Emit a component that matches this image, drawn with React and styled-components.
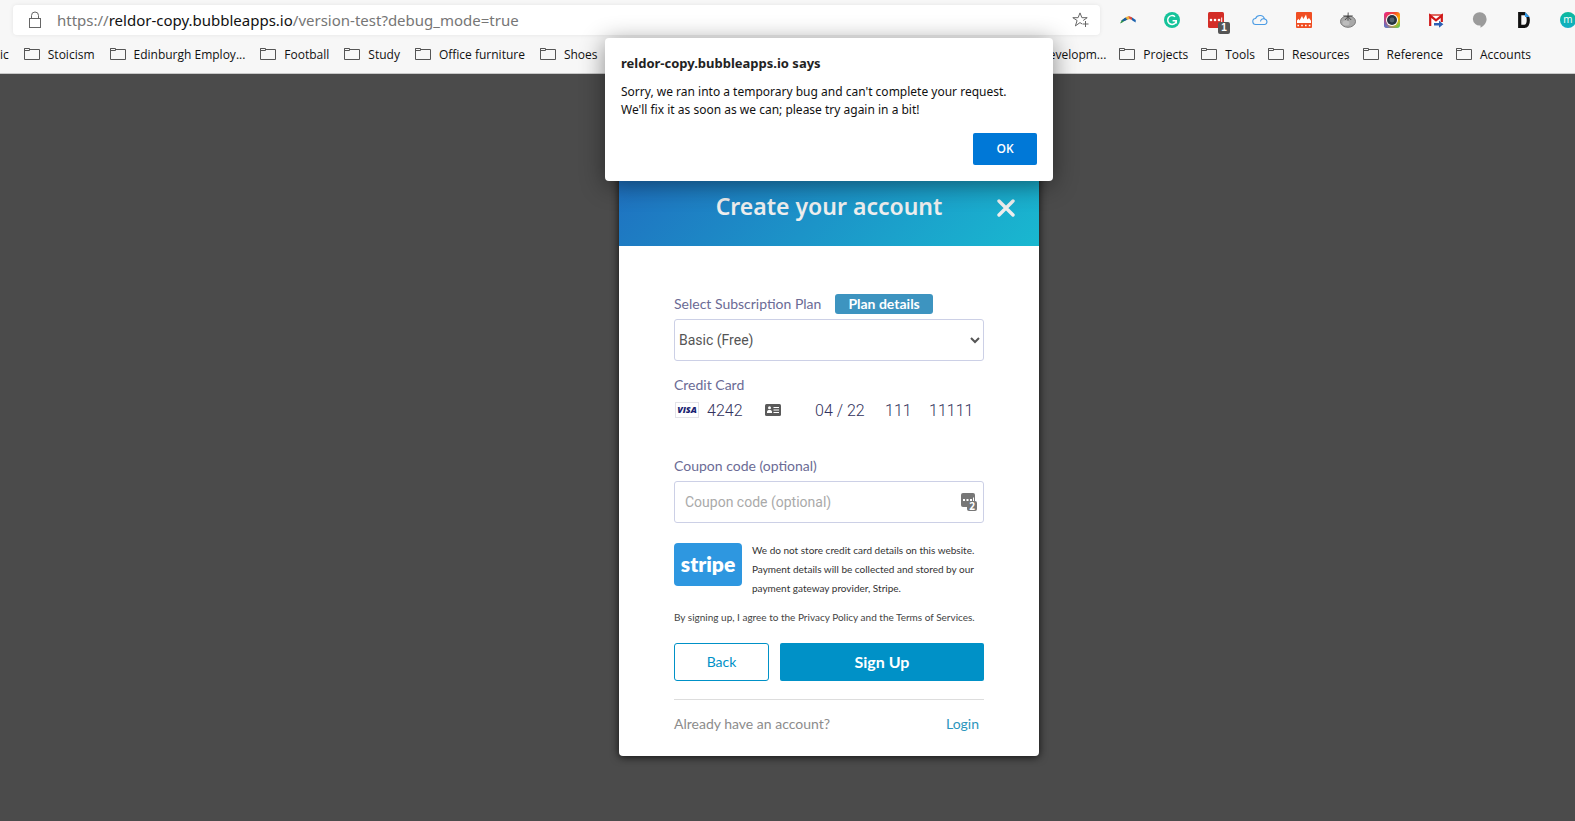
import { useState } from "react";
import styled, { createGlobalStyle } from "styled-components";

const folders = ["Stoicism", "Edinburgh Employ...", "Football", "Study", "Office furniture", "Shoes"];
const moreFolders = ["Projects", "Tools", "Resources", "Reference", "Accounts"];

const LockIcon = () => (
  <svg width="14" height="18" viewBox="0 0 14 18" fill="none" stroke="#666" strokeWidth="1">
    <rect x="1.5" y="7.5" width="11" height="9" />
    <path d="M3.5 7.5V4.5a3.5 3.5 0 0 1 7 0v3" />
  </svg>
);

const StarIcon = () => (
  <svg width="17" height="16" viewBox="0 0 17 16" fill="none" stroke="#666" strokeWidth="1">
    <path d="M10 11.9 8 10.6l-4.6 3.3 1.7-5.4L.8 5.7h5.3L8 .9l1.9 4.8h5.3l-4 2.8" />
    <path d="M13.5 9v6M10.5 12h6" />
  </svg>
);

const FolderIcon = () => (
  <svg width="16" height="12" viewBox="0 0 16 12" fill="none" stroke="#555" strokeWidth="1">
    <path d="M.5.5h5v2h-5zM5.5 1.5h10v10H.5v-11" />
  </svg>
);

const ContactIcon = () => (
  <svg width="16" height="12" viewBox="0 0 16 12">
    <rect width="16" height="12" rx="1.5" fill="#5a5a5a" />
    <circle cx="4.5" cy="3.8" r="1.5" fill="#fff" />
    <path d="M2 9V7.6C2 6.5 3 6 4.5 6S7 6.5 7 7.6V9z" fill="#fff" />
    <path d="M8.5 3.5H14M8.5 6H14M8.5 8.5H14" stroke="#fff" strokeWidth="1" />
  </svg>
);

const extensions = [
  {
    name: "Arc",
    art: (
      <>
        <path d="M0 11.5 1.8 8.2 5 6l1 2-3.4 2.2z" fill="#2f8f46" />
        <path d="M1.5 8.5 5 5.8 7 5l.8 2.6-3.3 1.5z" fill="#1b5c9e" />
        <path d="M5.5 5.2 9 4l1.2 3-3 .7z" fill="#f0b23c" />
        <path d="M8.5 4 12 5.2 12 8 9.6 6.9z" fill="#dc4a3d" />
        <path d="M11.8 5.2 15.8 8l-.2 2.4L12 8.2z" fill="#1b62ae" />
      </>
    ),
  },
  {
    name: "Grammar",
    art: (
      <>
        <circle cx="8" cy="8" r="8" fill="#15c39a" />
        <path d="M11 4.7A4.4 4.4 0 1 0 12.3 9.2M8.6 8.8h3.7v2.8" fill="none" stroke="#fff" strokeWidth="1.5" />
      </>
    ),
  },
  {
    name: "Passwords",
    count: "1",
    art: (
      <>
        <rect width="16" height="16" rx="1.5" fill="#d32d27" />
        <circle cx="3" cy="8" r="1.3" fill="#fff" />
        <circle cx="7" cy="8" r="1.3" fill="#fff" />
        <circle cx="11" cy="8" r="1.3" fill="#fff" />
        <rect x="13.2" y="5.5" width="1" height="5" fill="#fff" />
      </>
    ),
  },
  {
    name: "Cloud",
    art: (
      <path
        d="M4 12.5a3 3 0 0 1-.4-6A4.7 4.7 0 0 1 12.5 7a2.8 2.8 0 0 1 .3 5.5zM8.5 9.5A2.8 2.8 0 0 1 12.4 7"
        fill="none"
        stroke="#4a9be4"
        strokeWidth="1.1"
      />
    ),
  },
  {
    name: "Heat",
    art: (
      <>
        <rect width="16" height="16" rx="1" fill="#f04e23" />
        <path d="M1 11V8.5l1.7-1.8.8 1.8L6 4l1.4 3L10 2.5l1.3 5L13 6l2 2.8V11z" fill="#fff" />
        <path d="M1.4 13.4h13.5" stroke="#fff" strokeWidth="1.5" strokeDasharray="1.6 2.2" />
      </>
    ),
  },
  {
    name: "Tomato",
    art: (
      <>
        <ellipse cx="8" cy="9.5" rx="7.5" ry="5.8" fill="#a8a8a8" stroke="#777" />
        <ellipse cx="6" cy="11" rx="3.5" ry="2.5" fill="#bdbdbd" />
        <path d="m8 4.6-4.6-.8M8 4.6l4.6-.8M8 4.6 5 8M8 4.6 11.2 8M8 5l.2-4.5M8 5v3.6" fill="none" stroke="#444" strokeWidth=".9" />
      </>
    ),
  },
  {
    name: "Camera",
    art: (
      <>
        <defs>
          <linearGradient id="lensWarm" x1="0" y1="0" x2="1" y2="1">
            <stop offset="0" stopColor="#e0249a" />
            <stop offset=".35" stopColor="#f3462c" />
            <stop offset=".65" stopColor="#ffb000" />
            <stop offset="1" stopColor="#35c86a" />
          </linearGradient>
          <linearGradient id="lensCool" x1="1" y1="0" x2="0" y2="1">
            <stop offset=".55" stopColor="#5b52f0" stopOpacity="0" />
            <stop offset="1" stopColor="#2b78ff" />
          </linearGradient>
        </defs>
        <rect width="16" height="16" rx="3" fill="url(#lensWarm)" />
        <rect width="16" height="16" rx="3" fill="url(#lensCool)" />
        <circle cx="8" cy="8" r="6" fill="#fff" />
        <circle cx="8" cy="8" r="5" fill="#26343f" />
        <circle cx="8" cy="8" r="2.4" fill="#53646f" />
      </>
    ),
  },
  {
    name: "Mail",
    art: (
      <>
        <rect x="1" y="2" width="14" height="12" fill="#fff" />
        <path d="M1 2h14v2H1z" fill="#e06a62" />
        <path d="M2.2 14V3.6L8 8.4l5.8-4.8V10" fill="none" stroke="#d01818" strokeWidth="2.2" />
        <path d="M6 11h5V8.8l4.4 3.5-4.4 3.5v-2.4H6z" fill="#2d5fb4" />
      </>
    ),
  },
  {
    name: "Chat",
    art: <path d="M8 .3a6.6 6.6 0 0 1 6.6 6.6c0 3.8-2.8 7-6.1 8.8v-2.3A6.6 6.6 0 1 1 8 .3z" fill="#9b9b9b" />,
  },
  {
    name: "Document",
    art: (
      <>
        <path d="M3.7 1.7h4.5c3.5 0 4.1 3.1 4.1 6.3s-.6 6.3-4.1 6.3H3.7z" fill="none" stroke="#111" strokeWidth="3.2" />
        <path d="M9 0h5v5.5z" fill="#f7f7f7" />
        <path d="M9 .3 13.6 5H9z" fill="#2e9cf0" />
      </>
    ),
  },
  {
    name: "Messages",
    art: (
      <>
        <defs>
          <linearGradient id="teal" x1="0" y1="0" x2="0" y2="1">
            <stop offset="0" stopColor="#0cb99b" />
            <stop offset="1" stopColor="#12aec5" />
          </linearGradient>
        </defs>
        <circle cx="8" cy="8" r="8" fill="url(#teal)" />
        <text x="8" y="11" textAnchor="middle" fontFamily="Open Sans, sans-serif" fontSize="10" fill="#fff">m</text>
      </>
    ),
  },
];

const App = () => {
  const [plan, setPlan] = useState("basic");
  const [coupon, setCoupon] = useState("");
  const [open, setOpen] = useState(true);

  return (
    <Window>
      <GlobalStyle />
      <Toolbar>
        <AddressRow>
          <AddressBar>
            <LockIcon />
            <Url>
              https://<b>reldor-copy.bubbleapps.io</b>/version-test?debug_mode=true
            </Url>
            <StarIcon />
          </AddressBar>
          <Extensions>
            {extensions.map(({ name, art, count }) => (
              <Extension key={name} type="button">
                <svg width="16" height="16" viewBox="0 0 16 16">{art}</svg>
                {count && <Count>{count}</Count>}
              </Extension>
            ))}
          </Extensions>
        </AddressRow>
        <Bookmarks>
          <BookmarkGroup $gap={15}>
            <Bookmark href="#">ic</Bookmark>
            {folders.map((folder) => (
              <Bookmark key={folder} href="#">
                <FolderIcon />
                {folder}
              </Bookmark>
            ))}
          </BookmarkGroup>
          <BookmarkGroup $gap={13}>
            <Bookmark href="#">evelopm...</Bookmark>
            {moreFolders.map((folder) => (
              <Bookmark key={folder} href="#">
                <FolderIcon />
                {folder}
              </Bookmark>
            ))}
          </BookmarkGroup>
        </Bookmarks>
      </Toolbar>

      <Page>
        <Modal>
          <ModalHeader>
            <Title>Create your account</Title>
            <CloseButton type="button" aria-label="Close">
              <svg width="18" height="18" viewBox="0 0 18 18" stroke="currentColor" strokeWidth="3.4" strokeLinecap="round">
                <path d="M2 2l14 14M16 2 2 16" />
              </svg>
            </CloseButton>
          </ModalHeader>
          <Form onSubmit={(e) => e.preventDefault()}>
            <LabelRow>
              <Label htmlFor="plan">Select Subscription Plan</Label>
              <PlanButton type="button">Plan details</PlanButton>
            </LabelRow>
            <Select id="plan" value={plan} onChange={(e) => setPlan(e.target.value)}>
              <option value="basic">Basic (Free)</option>
            </Select>

            <CardLabel htmlFor="card">Credit Card</CardLabel>
            <CardRow>
              <Visa>VISA</Visa>
              <CardInput id="card" defaultValue="4242" $width={46} />
              <ContactIcon />
              <CardInput aria-label="Expiry" defaultValue="04 / 22" $width={58} $indent={22} />
              <CardInput aria-label="CVC" defaultValue="111" $width={32} />
              <CardInput aria-label="ZIP" defaultValue="11111" $width={48} />
            </CardRow>

            <CouponLabel htmlFor="coupon">Coupon code (optional)</CouponLabel>
            <CouponBox>
              <CouponInput
                id="coupon"
                type="text"
                placeholder="Coupon code (optional)"
                value={coupon}
                onChange={(e) => setCoupon(e.target.value)}
              />
              <svg width="17" height="19" viewBox="0 0 17 19">
                <rect width="14" height="14" rx="2" fill="#777" />
                <path d="M2 6h2v2H2zM5.5 6h2v2h-2zM9 6h2v2H9zM12 4.5h1V9h-1z" fill="#fff" />
                <rect x="6" y="8" width="10" height="10" rx="2" fill="#777" />
                <text x="11" y="17" textAnchor="middle" fontFamily="Open Sans, sans-serif" fontWeight="700" fontSize="10" fill="#fff">2</text>
              </svg>
            </CouponBox>

            <StripeRow>
              <StripeLogo>stripe</StripeLogo>
              <StripeNote>
                We do not store credit card details on this website. Payment details will be collected and stored by our
                payment gateway provider, Stripe.
              </StripeNote>
            </StripeRow>
            <Terms>By signing up, I agree to the Privacy Policy and the Terms of Services.</Terms>

            <Buttons>
              <BackButton type="button">Back</BackButton>
              <SignUpButton type="submit">Sign Up</SignUpButton>
            </Buttons>
            <Footer>
              <span>Already have an account?</span>
              <LoginLink href="#">Login</LoginLink>
            </Footer>
          </Form>
        </Modal>
      </Page>

      {open && (
        <AlertLayer>
          <Alert role="alertdialog" aria-labelledby="alert-title">
            <AlertTitle id="alert-title">reldor-copy.bubbleapps.io says</AlertTitle>
            <AlertText>
              Sorry, we ran into a temporary bug and can't complete your request.
              <br />
              We'll fix it as soon as we can; please try again in a bit!
            </AlertText>
            <OkButton type="button" onClick={() => setOpen(false)}>OK</OkButton>
          </Alert>
        </AlertLayer>
      )}
    </Window>
  );
};

export default App;

const GlobalStyle = createGlobalStyle`
  * {
    box-sizing: border-box;
  }
  body {
    margin: 0;
    font-family: "Noto Sans", "Open Sans", sans-serif;
  }
  button {
    cursor: pointer;
  }
`;

const Window = styled.div`
  position: relative;
  display: flex;
  flex-direction: column;
  min-height: 100vh;
  overflow: hidden;
  background: #4b4b4b;
`;

const Toolbar = styled.header`
  padding-top: 5px;
  background: #f7f7f7;
  border-bottom: 1px solid #c8c8c8;
`;

const AddressRow = styled.div`
  display: flex;
  align-items: center;
  height: 30px;
  padding-left: 13px;
`;

const AddressBar = styled.div`
  display: flex;
  flex: 1;
  align-items: center;
  height: 30px;
  padding: 0 11px 0 15px;
  border-radius: 4px;
  background: #fff;
  box-shadow: 0 0 4px rgba(0, 0, 0, 0.08);
`;

const Url = styled.span`
  flex: 1;
  margin-left: 15px;
  color: #767676;
  font-size: 15px;

  b {
    color: #111;
    font-weight: 400;
  }
`;

const Extensions = styled.div`
  display: flex;
  gap: 28px;
  margin-left: 20px;
  margin-right: -1px;
`;

const Extension = styled.button`
  position: relative;
  display: block;
  width: 16px;
  height: 16px;
  padding: 0;
  border: 0;
  background: none;

  svg {
    display: block;
  }
`;

const Count = styled.span`
  position: absolute;
  top: 10px;
  left: 10px;
  width: 12px;
  border-radius: 2px;
  background: #555;
  color: #fff;
  font-size: 10px;
  font-weight: 700;
  line-height: 12px;
`;

const Bookmarks = styled.nav`
  display: flex;
  align-items: center;
  justify-content: space-between;
  height: 38px;
  padding-right: 44px;
`;

const BookmarkGroup = styled.div`
  display: flex;
  gap: ${({ $gap }) => $gap}px;
`;

const Bookmark = styled.a`
  display: flex;
  align-items: center;
  gap: 8px;
  color: #111;
  font-family: "Open Sans", sans-serif;
  font-size: 12px;
  text-decoration: none;
  white-space: nowrap;
`;

const Page = styled.main`
  display: flex;
  flex: 1;
  align-items: flex-start;
  justify-content: center;
  padding: 92px 0 65px 83px;
`;

const Modal = styled.section`
  width: 100%;
  max-width: 420px;
  overflow: hidden;
  border-radius: 4px;
  background: #fff;
  box-shadow: 0 1px 8px rgba(0, 0, 0, 0.8);
`;

const ModalHeader = styled.div`
  display: grid;
  grid-template-columns: 1fr auto 1fr;
  align-items: center;
  height: 80px;
  padding: 0 24px;
  background: linear-gradient(135deg, #1f6fc0, #19b8d0);
  color: #eee;
`;

const Title = styled.h1`
  grid-column: 2;
  margin: 0;
  font-size: 23px;
  font-weight: 600;
  line-height: 32px;
`;

const CloseButton = styled.button`
  justify-self: end;
  padding: 4px 0 0;
  border: 0;
  background: none;
  color: #eee;

  svg {
    display: block;
  }
`;

const Form = styled.form`
  display: flex;
  flex-direction: column;
  padding: 48px 55px 22px;
  font-family: Lato, sans-serif;
`;

const LabelRow = styled.div`
  display: flex;
  align-items: center;
  gap: 14px;
  margin-bottom: 5px;
`;

const Label = styled.label`
  color: #6b6b95;
  font-size: 14px;
  line-height: 20px;
`;

const PlanButton = styled.button`
  height: 20px;
  padding: 0 13px 2px;
  border: 0;
  border-radius: 3px;
  background: #3d94c0;
  color: #fff;
  font-family: Lato, sans-serif;
  font-size: 14px;
  font-weight: 700;
`;

const Select = styled.select`
  width: 100%;
  height: 42px;
  border: 1px solid #ccd0e6;
  border-radius: 3px;
  background: #fff;
  color: #555;
  font-family: Roboto, sans-serif;
  font-size: 14px;
`;

const CardLabel = styled(Label)`
  margin-top: 14px;
`;

const CardRow = styled.div`
  display: flex;
  align-items: center;
  gap: 12px;
  height: 30px;
`;

const Visa = styled.span`
  width: 24px;
  margin-left: 1px;
  margin-right: -4px;
  border: 1px solid #e3e3e8;
  color: #1a1f71;
  font-family: "Open Sans", sans-serif;
  font-size: 9px;
  font-style: italic;
  font-weight: 800;
  line-height: 14px;
  text-align: center;
`;

const CardInput = styled.input`
  width: ${({ $width }) => $width}px;
  margin-left: ${({ $indent }) => $indent || 0}px;
  padding: 0;
  border: 0;
  outline: 0;
  color: #32325d;
  font-family: Roboto, sans-serif;
  font-size: 16px;
  font-weight: 300;
`;

const CouponLabel = styled(Label)`
  margin-top: 31px;
  margin-bottom: 5px;
`;

const CouponBox = styled.div`
  display: flex;
  align-items: center;
  height: 42px;
  padding: 0 5px 0 10px;
  border: 1px solid #ccd0e6;
  border-radius: 3px;
`;

const CouponInput = styled.input`
  flex: 1;
  padding: 0;
  border: 0;
  outline: 0;
  color: #555;
  font-family: Roboto, sans-serif;
  font-size: 14px;

  &::placeholder {
    color: #aaa;
  }
`;

const StripeRow = styled.div`
  display: flex;
  align-items: flex-start;
  gap: 10px;
  margin-top: 18px;
`;

const StripeLogo = styled.span`
  flex: none;
  width: 68px;
  margin-top: 2px;
  padding-bottom: 2px;
  border-radius: 4px;
  background: #2e97e0;
  color: #fff;
  font-size: 21px;
  font-weight: 800;
  line-height: 41px;
  text-align: center;
`;

const StripeNote = styled.p`
  margin: 0;
  color: #333;
  font-size: 10px;
  line-height: 19px;
`;

const Terms = styled.p`
  margin: 10px 0 16px;
  color: #444;
  font-size: 10px;
  line-height: 19px;
`;

const Buttons = styled.div`
  display: flex;
  gap: 11px;
`;

const BackButton = styled.button`
  width: 95px;
  height: 38px;
  padding: 0 0 2px;
  border: 1px solid #0091c7;
  border-radius: 3px;
  background: #fff;
  color: #0091c7;
  font-family: Lato, sans-serif;
  font-size: 14px;
`;

const SignUpButton = styled.button`
  flex: 1;
  height: 38px;
  padding: 0 0 2px;
  border: 0;
  border-radius: 2px;
  background: #0091c7;
  color: #fff;
  font-family: Lato, sans-serif;
  font-size: 16px;
  font-weight: 700;
`;

const Footer = styled.div`
  display: flex;
  justify-content: space-between;
  margin-top: 18px;
  padding: 14px 5px 0 0;
  border-top: 1px solid #ddd;
  color: #8c8c8c;
  font-size: 14px;
  line-height: 20px;
`;

const LoginLink = styled.a`
  color: #2b96bd;
  text-decoration: none;
`;

const AlertLayer = styled.div`
  position: absolute;
  top: 38px;
  right: 0;
  left: 83px;
  display: flex;
  justify-content: center;
`;

const Alert = styled.div`
  display: flex;
  flex-direction: column;
  width: 100%;
  max-width: 448px;
  padding: 16px;
  border-radius: 4px;
  background: #fff;
  box-shadow: 0 4px 24px rgba(0, 0, 0, 0.45);
`;

const AlertTitle = styled.h2`
  margin: 0 0 11px;
  color: #222;
  font-size: 13px;
  font-weight: 700;
  line-height: 18px;
`;

const AlertText = styled.p`
  margin: 0 0 14px;
  color: #111;
  font-size: 12px;
  line-height: 18px;
`;

const OkButton = styled.button`
  align-self: flex-end;
  width: 64px;
  height: 32px;
  padding: 0 0 2px;
  border: 0;
  border-radius: 2px;
  background: #0078d7;
  color: #fff;
  font-family: "Open Sans", sans-serif;
  font-size: 12px;
  font-weight: 600;
`;
